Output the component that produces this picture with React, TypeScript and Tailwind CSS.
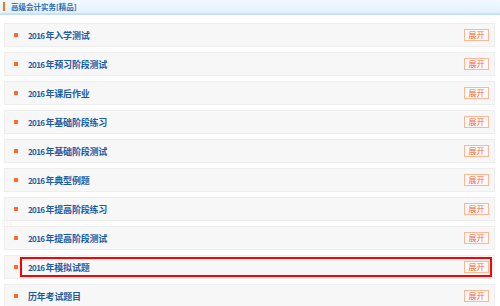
import React from "react";

const items = [
  "2016年入学测试",
  "2016年预习阶段测试",
  "2016年课后作业",
  "2016年基础阶段练习",
  "2016年基础阶段测试",
  "2016年典型例题",
  "2016年提高阶段练习",
  "2016年提高阶段测试",
  "2016年模拟试题",
  "历年考试题目",
];

function Label({ text }: { text: string }) {
  const m = text.match(/^(\d+)(.*)$/);
  if (!m) return <>{text}</>;
  return (
    <>
      <span className="text-[8px] tracking-[-0.6px]">{m[1]}</span>
      <span className="ml-[1px]">{m[2]}</span>
    </>
  );
}

export default function App() {
  return (
    <div
      className="w-[500px] h-[306px] overflow-hidden bg-white"
      style={{ fontFamily: '"Noto Sans CJK SC", "Noto Sans", sans-serif' }}
    >
      <div className="h-[15px] flex items-center bg-gradient-to-b from-[#f2f9fe] to-[#e2f1fb] border-b-2 border-[#c6e3f6]">
        <div className="ml-[3px] w-[2px] h-[9px] bg-[#f07a1a]" />
        <span className="ml-[6px] text-[7.5px] leading-none font-bold text-[#2f6fb3]">
          高级会计实务[精品]
        </span>
      </div>
      <div className="flex flex-col gap-[5px] pt-[8px] pl-[4px] pr-[5px]">
        {items.map((t, i) => (
          <div
            key={t}
            className="relative h-[24px] shrink-0 flex items-center bg-[#f7f7f7] border border-[#eeeeee]"
          >
            <div className="ml-[9px] w-[4px] h-[4px] bg-[#ff6a2a]" />
            <span className="ml-[10px] text-[9px] leading-none font-bold text-[#1d5ba3] tracking-[-0.2px]">
              <Label text={t} />
            </span>
            <div className="ml-auto mr-[5px] w-[25px] h-[12px] flex items-center justify-center border border-[#ffb596] bg-[#fffaf7] text-[8px] leading-none text-[#f26a3e]">
              展开
            </div>
            {i === 8 && (
              <div className="absolute left-[15px] right-[2px] top-[1px] bottom-[1px] border-[2.5px] border-[#ff0000]" />
            )}
          </div>
        ))}
      </div>
    </div>
  );
}
